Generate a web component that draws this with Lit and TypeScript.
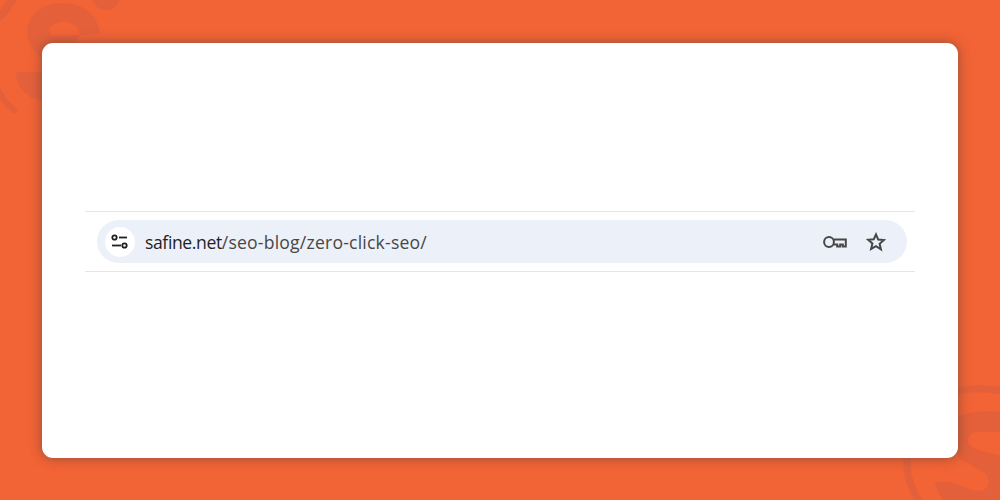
import {LitElement, css, html} from "lit";
import {customElement} from "lit/decorators.js";

@customElement("app-root")
export class AppRoot extends LitElement {
  static styles = css`
    :host {
      display: flex;
      position: relative;
      width: 1000px;
      height: 500px;
      overflow: hidden;
      box-sizing: border-box;
      padding: 43px 42px 42px;
      background: #f26335;
    }
    .decor {
      position: absolute;
      left: 0;
      top: 0;
    }
    .card {
      position: relative;
      flex: 1;
      display: flex;
      flex-direction: column;
      justify-content: center;
      box-sizing: border-box;
      padding: 0 43px 18px;
      background: #fff;
      border-radius: 11px;
      box-shadow: 0 0 12px rgba(70, 60, 60, 0.55);
    }
    .strip {
      border-top: 1px solid #e3e5e8;
      border-bottom: 1px solid #e3e5e8;
      padding: 8px 8px 8px 12px;
    }
    .bar {
      display: flex;
      align-items: center;
      height: 43px;
      border-radius: 22px;
      background: #ecf0f8;
      padding: 0 21px 0 8px;
    }
    .tune {
      width: 30px;
      height: 30px;
      border-radius: 50%;
      background: #fff;
      display: flex;
      align-items: center;
      justify-content: center;
      margin-right: 10px;
    }
    .url {
      flex: 1;
      font-family: "Open Sans", sans-serif;
      font-size: 17.6px;
      letter-spacing: 0.2px;
      color: #474747;
      white-space: nowrap;
    }
    .url b {
      font-weight: 400;
      letter-spacing: -0.4px;
      color: #1f1f1f;
    }
    .key {
      margin-right: 19px;
    }
    svg {
      display: block;
    }
  `;

  render() {
    return html`
      <svg class="decor" width="1000" height="500" viewBox="0 0 1000 500" fill="none">
        <g stroke="#e3603a" stroke-linecap="round">
          <path d="M-4 19Q6 12 14 -4" stroke-width="8"/>
          <path d="M-3 89Q4 102 14 110" stroke-width="6"/>
          <path d="M1003 391C975 386 950 388 935 405C905 435 895 470 925 510" stroke-width="7"/>
        </g>
        <g fill="#e3603a">
          <circle cx="106" cy="-4" r="14"/>
          <path d="M100 34C98 14 82 3 62 3C40 3 27 18 27 32C27 42 32 50 42 58L70 50L80 35Z"/>
          <path d="M16 72H45V101C28 100 16 88 16 72Z"/>
          <path d="M1000 412C985 410 970 412 958 416V482H935C936 490 940 496 945 503H1000Z"/>
        </g>
        <g fill="#f26335">
          <path d="M49 31C49 24 58 22 65 22C72 22 78 26 80 35L55 36C51 36 49 34 49 31Z"/>
          <path d="M1003 432H978C970 432 967 438 968 443C970 449 985 452 1003 456Z"/>
          <path d="M955 456L985 473C992 482 988 491 978 491C970 491 962 484 950 483Z"/>
        </g>
      </svg>
      <div class="card">
        <div class="strip">
          <div class="bar">
            <div class="tune">
              <svg width="18" height="16" viewBox="0 0 18 16" fill="none" stroke="#1f1f1f" stroke-width="1.8">
                <circle cx="3.5" cy="3.5" r="2.2"/>
                <path d="M8 3.5h8"/>
                <circle cx="13.5" cy="11.5" r="2.2"/>
                <path d="M1 11.5h9"/>
              </svg>
            </div>
            <div class="url"><b>safine.net</b>/seo-blog/zero-click-seo/</div>
            <svg class="key" width="24" height="14" viewBox="0 0 24 14" fill="none" stroke="#474747" stroke-width="2">
              <circle cx="6" cy="7" r="4.9"/>
              <path d="M11 4.6h11.8v7h-3V9.4h-2.6v2.2h-3V9.4H11"/>
            </svg>
            <svg width="20" height="20" viewBox="0 0 20 20" fill="none" stroke="#474747" stroke-width="2" stroke-linejoin="miter">
              <path d="M10 2.4l2.2 5.2 5.7.5-4.3 3.7 1.3 5.5L10 14.1l-4.9 2.8 1.3-5.5-4.3-3.7 5.7-.5z"/>
            </svg>
          </div>
        </div>
      </div>
    `;
  }
}
